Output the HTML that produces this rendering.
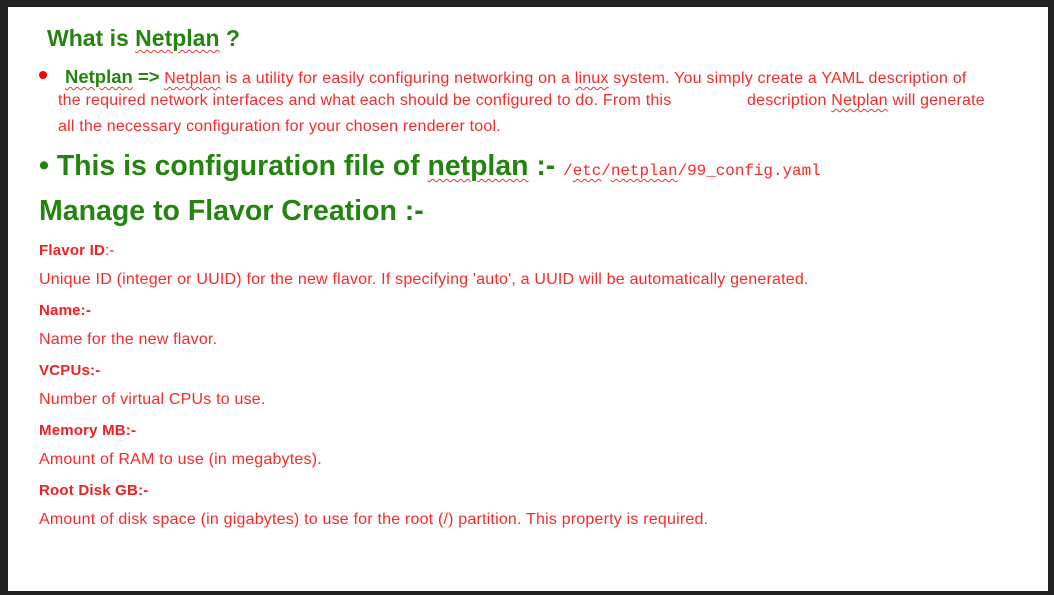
<!DOCTYPE html>
<html><head><meta charset="utf-8"><style>
html,body{margin:0;padding:0;}
body{width:1054px;height:595px;background:#222;position:relative;overflow:hidden;font-family:"Liberation Sans",sans-serif;}
.page{position:absolute;left:8px;top:7px;width:1040px;height:584px;background:#fff;}
.a{position:absolute;white-space:nowrap;}
.g{color:#23850f;font-weight:bold;}
.r{color:#f52a2a;}
.sq{text-decoration:underline wavy #e33;text-decoration-thickness:1px;text-underline-offset:3px;}
.s{font-size:16px;letter-spacing:0.2px;}
.lb{font-size:15px;font-weight:bold;color:#f02020;letter-spacing:0.2px;}
.mono{font-family:"Liberation Mono",monospace;}
</style></head><body>
<div class="page">
<div class="a g" style="left:39px;top:18px;font-size:23px;">What is <span class="sq">Netplan</span> ?</div>
<div class="a" style="left:31px;top:64px;width:8px;height:8px;border-radius:50%;background:#f00;"></div>
<div class="a s r" style="left:57px;top:59px;"><span class="g" style="font-size:18.5px;letter-spacing:0;"><span class="sq">Netplan</span> =&gt;</span> <span class="sq">Netplan</span> is a utility for easily configuring networking on a <span class="sq">linux</span> system. You simply create a YAML description of</div>
<div class="a s r" style="left:50px;top:85px;">the required network interfaces and what each should be configured to do. From this</div>
<div class="a s r" style="left:739px;top:85px;">description <span class="sq">Netplan</span> will generate</div>
<div class="a s r" style="left:50px;top:111px;">all the necessary configuration for your chosen renderer tool.</div>
<div class="a g" style="left:31px;top:143px;font-size:28.4px;">• This is configuration file of <span class="sq">netplan</span> :- <span class="mono r" style="font-size:15.9px;font-weight:normal;">/<span class="sq">etc</span>/<span class="sq">netplan</span>/99_config.yaml</span></div>
<div class="a g" style="left:31px;top:188px;font-size:28.5px;">Manage to Flavor Creation :-</div>
<div class="a lb" style="left:31px;top:235px;">Flavor ID<span style="font-weight:normal">:-</span></div>
<div class="a s r" style="left:31px;top:264px;">Unique ID (integer or UUID) for the new flavor. If specifying 'auto', a UUID will be automatically generated.</div>
<div class="a lb" style="left:31px;top:295px;">Name:-</div>
<div class="a s r" style="left:31px;top:324px;">Name for the new flavor.</div>
<div class="a lb" style="left:31px;top:355px;">VCPUs:-</div>
<div class="a s r" style="left:31px;top:384px;">Number of virtual CPUs to use.</div>
<div class="a lb" style="left:31px;top:415px;">Memory MB:-</div>
<div class="a s r" style="left:31px;top:444px;">Amount of RAM to use (in megabytes).</div>
<div class="a lb" style="left:31px;top:475px;">Root Disk GB:-</div>
<div class="a s r" style="left:31px;top:504px;">Amount of disk space (in gigabytes) to use for the root (/) partition. This property is required.</div>
</div>
</body></html>
